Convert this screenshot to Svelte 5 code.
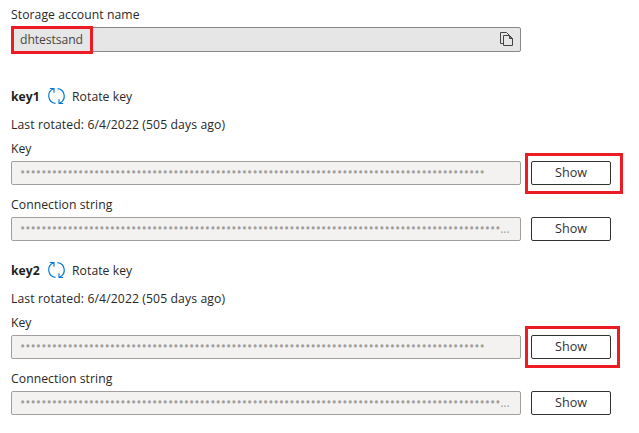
<script>
  const groups = [
    { name: 'key1', mark: 'first' },
    { name: 'key2', mark: 'second' }
  ];
  const keyMask = '•'.repeat(88);
  const connectionMask = '•'.repeat(91);
</script>

<main>
  <div class="label account"><span class="t-account">Storage account name</span></div>
  <div class="field name-field">
    <span class="t-name">dhtestsand</span>
    <svg class="copy" width="14" height="16" viewBox="0 0 14 16" fill="none" stroke="#444" stroke-width="1">
      <path d="M3.5 11.5H.5V.5H6.5L9 3" />
      <path d="M3.5 3.5H9.5L12.5 6.5V13.5H3.5Z" />
      <path d="M9.5 3.5V6.5H12.5Z" fill="#777" />
    </svg>
    <div class="mark name-mark"></div>
  </div>

  {#each groups as group}
    <section>
      <div class="head">
        <strong>{group.name}</strong>
        <svg width="18" height="18" viewBox="0 0 18 18" fill="none" stroke="#0078d4" stroke-width="1.15">
          <path d="M7.5 16.4A7.5 7.5 0 0 1 5.2 2.1M1.8 1.5H6V5.8" />
          <path d="M9.5 1.6A7.5 7.5 0 0 1 11.8 15.9M15.2 16.5H11V12.2" />
        </svg>
        <span class="t-rotate">Rotate key</span>
      </div>
      <div class="label rotated"><span class="t-rotated">Last rotated: 6/4/2022 (505 days ago)</span></div>
      <div class="label"><span class="t-key">Key</span></div>
      <div class="row">
        <div class="field secret"><span class="dots">{keyMask}</span></div>
        <button>Show</button>
        <div class="mark {group.mark}"></div>
      </div>
      <div class="label connection"><span class="t-conn">Connection string</span></div>
      <div class="row">
        <div class="field secret"><span class="dots">{connectionMask}</span><span class="more">...</span></div>
        <button>Show</button>
      </div>
    </section>
  {/each}
</main>

<style>
  :global(body) { margin: 0; background: #fff; }
  main {
    box-sizing: border-box;
    width: 639px;
    height: 433px;
    overflow: hidden;
    padding: 5px 0 0 11px;
    color: #292827;
    font: 12.2px/20px "Open Sans", "Noto Sans", sans-serif;
    white-space: nowrap;
  }
  .label { height: 20px; }
  .account { height: 22px; }
  .t-account, .t-conn { letter-spacing: 0.06px; }
  .t-rotated { letter-spacing: 0.11px; }
  .field {
    box-sizing: border-box;
    display: flex;
    align-items: center;
    width: 510px;
    height: 24px;
    padding: 0 7px 0 8px;
    border: 1px solid #a19f9d;
    border-radius: 2px;
    background: #f3f2f1;
    color: #a19f9d;
  }
  .name-field {
    position: relative;
    height: 25px;
    margin-bottom: 33px;
    padding-right: 6px;
    border-color: #8a8886;
    background: #e6e6e6;
    color: #484644;
    justify-content: space-between;
  }
  .t-name { letter-spacing: -0.08px; }
  .mark { position: absolute; box-sizing: border-box; border: 3px solid #ed1c24; }
  .name-mark { left: -1px; top: -2px; width: 82px; height: 28px; }
  .first { left: 514px; top: -8px; width: 98px; height: 41px; }
  .second { left: 514px; top: -9px; width: 95px; height: 42px; }
  section { height: 174px; }
  .head { display: flex; align-items: center; height: 22px; padding-top: 1px; }
  .head strong { width: 36px; color: #201f1e; }
  .head svg { margin: -3px 6px 0 1px; }
  .t-rotate { letter-spacing: 0.06px; }
  .rotated { height: 24px; margin-top: 7px; }
  .row { position: relative; display: flex; gap: 10px; margin-top: 2px; }
  .connection { margin-top: 10px; }
  .dots { font-size: 14px; letter-spacing: 0.018px; text-rendering: geometricPrecision; }
  .more { margin-left: -0.5px; }
  button {
    box-sizing: border-box;
    width: 80px;
    height: 24px;
    padding: 0;
    border: 1px solid #323130;
    border-radius: 2px;
    background: #fff;
    color: #323130;
    font: 500 12.6px/20px "Open Sans", "Noto Sans", sans-serif;
  }
</style>
